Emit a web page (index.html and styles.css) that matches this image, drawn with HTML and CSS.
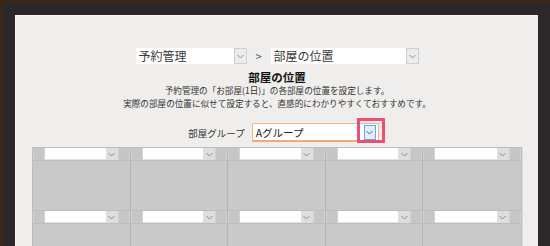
FILE: index.html
```
<html>
<head>
    <meta charset="utf-8">
    <link rel="stylesheet" href="styles.css">
</head>
<body>
    <div class="wood">
        <div class="frame">
            <div class="paper">
                <div class="crumbs">
                    <div class="pick pick-menu">
                        <span class="pick-text">予約管理</span>
                        <span class="pick-btn"><svg width="7" height="5" viewBox="0 0 7 5"><polyline points="0.5,1 3.5,4 6.5,1" fill="none" stroke="#8a8a8a" stroke-width="1"/></svg></span>
                    </div>
                    <span class="sep">&gt;</span>
                    <div class="pick pick-page">
                        <span class="pick-text">部屋の位置</span>
                        <span class="pick-btn"><svg width="7" height="5" viewBox="0 0 7 5"><polyline points="0.5,1 3.5,4 6.5,1" fill="none" stroke="#8a8a8a" stroke-width="1"/></svg></span>
                    </div>
                </div>

                <h2 class="title">部屋の位置</h2>
                <p class="desc">予約管理の「お部屋(1日)」の各部屋の位置を設定します。<br>実際の部屋の位置に似せて設定すると、直感的にわかりやすくておすすめです。</p>

                <div class="group-row">
                    <span class="group-label">部屋グループ</span>
                    <div class="group-pick">
                        <span class="group-text">Aグループ</span>
                        <span class="group-btn"><svg width="7" height="5" viewBox="0 0 7 5"><polyline points="0.5,1 3.5,4 6.5,1" fill="none" stroke="#666" stroke-width="1"/></svg></span>
                        <span class="mark"></span>
                    </div>
                </div>

                <div class="room-grid" id="rooms"></div>
            </div>
        </div>
    </div>

    <script>
        // 部屋のセルを並べる (5列 x 2行)
        const rooms = document.getElementById('rooms');
        const chevron = '<svg width="7" height="5" viewBox="0 0 7 5"><polyline points="0.5,1 3.5,4 6.5,1" fill="none" stroke="#8c8c8c" stroke-width="1"/></svg>';
        for (let i = 0; i < 10; i++) {
            const cell = document.createElement('div');
            cell.className = 'room';
            cell.innerHTML =
                '<div class="room-head">' +
                '<span class="room-knob"></span>' +
                '<span class="room-input"></span>' +
                '<span class="room-btn">' + chevron + '</span>' +
                '<span class="room-knob"></span>' +
                '</div>';
            rooms.appendChild(cell);
        }
    </script>
</body>
</html>
```

FILE: styles.css
```
html {
    height: 246px;
    overflow: hidden;
}

body {
    margin: 0;
    height: 246px;
    overflow: hidden;
    background-color: #3c2519;
    font-family: "Noto Sans CJK JP", "Noto Sans", sans-serif;
    color: #333;
}

.wood {
    padding: 3px 0 0 3px;
    height: 100%;
    box-sizing: border-box;
}

.frame {
    height: 100%;
    box-sizing: border-box;
    padding: 12px 12px 0 12px;
    background-color: #2a2828;
}

.paper {
    height: 100%;
    box-sizing: border-box;
    overflow: hidden;
    padding: 32px 16px 0;
    background-color: #efeeec;
    border-top: 1px solid #f8f8f6;
    border-left: 1px solid #f8f8f6;
}

/* 上のパンくず */
.crumbs {
    display: flex;
    justify-content: center;
    align-items: center;
    height: 16px;
}

.pick {
    display: flex;
    align-items: stretch;
    height: 16px;
    background-color: #fff;
    box-sizing: border-box;
}

.pick-menu {
    width: 111px;
}

.pick-page {
    width: 148px;
}

.pick-text {
    flex: 1;
    padding-left: 3px;
    font-size: 12px;
    line-height: 16px;
    color: #3a3a3a;
}

.pick-btn {
    width: 13px;
    display: flex;
    align-items: center;
    justify-content: center;
    background-color: #ececec;
    border: 1px solid #cfcfcf;
    box-sizing: border-box;
}

.sep {
    width: 24px;
    text-align: center;
    font-size: 11px;
    color: #555;
}

.title {
    margin: 6px 0 0;
    text-align: center;
    font-size: 11.5px;
    line-height: 14px;
    font-weight: bold;
    color: #111;
}

.desc {
    margin: 0;
    text-align: center;
    font-size: 8.6px;
    line-height: 13px;
    color: #333;
}

/* 部屋グループ */
.group-row {
    display: flex;
    justify-content: center;
    align-items: center;
    margin-top: 13px;
    padding-left: 13px;
    height: 19px;
}

.group-label {
    font-size: 9.5px;
    margin-right: 7px;
    color: #333;
}

.group-pick {
    position: relative;
    display: flex;
    align-items: center;
    width: 127px;
    height: 19px;
    box-sizing: border-box;
    background-color: #fff;
    border: 1px solid #f3b488;
    border-bottom: 2px solid #f3a877;
}

.group-text {
    flex: 1;
    padding-left: 3px;
    font-size: 10.5px;
    color: #222;
}

.group-btn {
    width: 12px;
    height: 15px;
    margin-right: 2px;
    display: flex;
    align-items: center;
    justify-content: center;
    background-color: #e4eef8;
    border: 1px solid #6aa6dc;
    box-sizing: border-box;
}

.mark {
    position: absolute;
    left: 104px;
    top: -6px;
    width: 28px;
    height: 25px;
    box-sizing: border-box;
    border: 3px solid #ea4f78;
}

/* 部屋の配置 */
.room-grid {
    margin-top: 5px;
    display: grid;
    grid-template-columns: repeat(5, 1fr);
    grid-auto-rows: 63px;
    background-color: #c9c9c9;
    border: 1px solid #bdbdbd;
    box-shadow: 1px 0 0 #dcdcdc;
}

.room {
    border-right: 1px solid #b4b4b4;
    border-bottom: 1px solid #bcbcbc;
}

.room:nth-child(5n) {
    border-right: none;
}

.room-head {
    display: flex;
    height: 12px;
    border-bottom: 1px solid #bdbdbd;
}

.room-knob {
    width: 12px;
    background-color: #c6c6c6;
    border-left: 1px solid #d2d2d2;
    border-right: 1px solid #d2d2d2;
    box-sizing: border-box;
}

.room-input {
    flex: 1;
    background-color: #fff;
    border-bottom: 1px solid #e2e2e2;
}

.room-btn {
    width: 12px;
    display: flex;
    align-items: center;
    justify-content: center;
    background-color: #dedede;
}
```
